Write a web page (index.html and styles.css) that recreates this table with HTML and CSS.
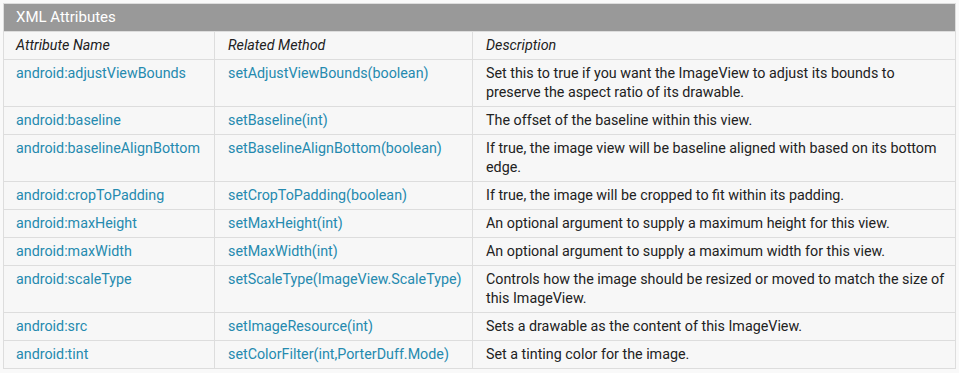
FILE: index.html
```html
<!DOCTYPE html>
<html lang="en">
<head>
  <meta charset="utf-8">
  <title>XML Attributes</title>
  <link rel="stylesheet" href="styles.css">
</head>
<body>
  <table class="attrs">
    <colgroup>
      <col class="c1">
      <col class="c2">
      <col class="c3">
    </colgroup>
    <tr>
      <th colspan="3" class="table-title">XML Attributes</th>
    </tr>
    <tr class="col-heads">
      <td>Attribute Name</td>
      <td>Related Method</td>
      <td>Description</td>
    </tr>
    <tr>
      <td><a href="#">android:adjustViewBounds</a></td>
      <td><a href="#">setAdjustViewBounds(boolean)</a></td>
      <td>Set this to true if you want the ImageView to adjust its bounds to preserve the aspect ratio of its drawable.</td>
    </tr>
    <tr>
      <td><a href="#">android:baseline</a></td>
      <td><a href="#">setBaseline(int)</a></td>
      <td>The offset of the baseline within this view.</td>
    </tr>
    <tr>
      <td><a href="#">android:baselineAlignBottom</a></td>
      <td><a href="#">setBaselineAlignBottom(boolean)</a></td>
      <td>If true, the image view will be baseline aligned with based on its bottom edge.</td>
    </tr>
    <tr>
      <td><a href="#">android:cropToPadding</a></td>
      <td><a href="#">setCropToPadding(boolean)</a></td>
      <td>If true, the image will be cropped to fit within its padding.</td>
    </tr>
    <tr>
      <td><a href="#">android:maxHeight</a></td>
      <td><a href="#">setMaxHeight(int)</a></td>
      <td>An optional argument to supply a maximum height for this view.</td>
    </tr>
    <tr>
      <td><a href="#">android:maxWidth</a></td>
      <td><a href="#">setMaxWidth(int)</a></td>
      <td>An optional argument to supply a maximum width for this view.</td>
    </tr>
    <tr>
      <td><a href="#">android:scaleType</a></td>
      <td><a href="#">setScaleType(ImageView.ScaleType)</a></td>
      <td>Controls how the image should be resized or moved to match the size of this ImageView.</td>
    </tr>
    <tr>
      <td><a href="#">android:src</a></td>
      <td><a href="#">setImageResource(int)</a></td>
      <td>Sets a drawable as the content of this ImageView.</td>
    </tr>
    <tr>
      <td><a href="#">android:tint</a></td>
      <td><a href="#">setColorFilter(int,PorterDuff.Mode)</a></td>
      <td>Set a tinting color for the image.</td>
    </tr>
  </table>
</body>
</html>
```
FILE: styles.css
```css
body {
  margin: 0;
  padding: 3px 3px 0 3px;
  background-color: #f9f9f9;
  font-family: Roboto, 'Liberation Sans', sans-serif;
  font-size: 14.3px;
  color: #222222;
}

.attrs {
  width: 953px;
  table-layout: fixed;
  border-collapse: collapse;
  background-color: #f7f7f7;
  border: 1px solid #dddddd;
}

.attrs td,
.attrs th {
  border: 1px solid #dddddd;
  padding: 4px 9px 4px 13px;
  line-height: 19px;
  vertical-align: top;
  text-align: left;
}

.attrs td:first-child,
.attrs th {
  padding-left: 12px;
}

.table-title {
  background-color: #999999;
  color: #ffffff;
  font-weight: normal;
  font-size: 15px;
  height: 19px;
  border-color: #999999;
}

.col-heads td {
  font-style: italic;
}

.c1 {
  width: 211px;
}

.c2 {
  width: 258px;
}

a {
  color: #258aaf;
  text-decoration: none;
}
```
